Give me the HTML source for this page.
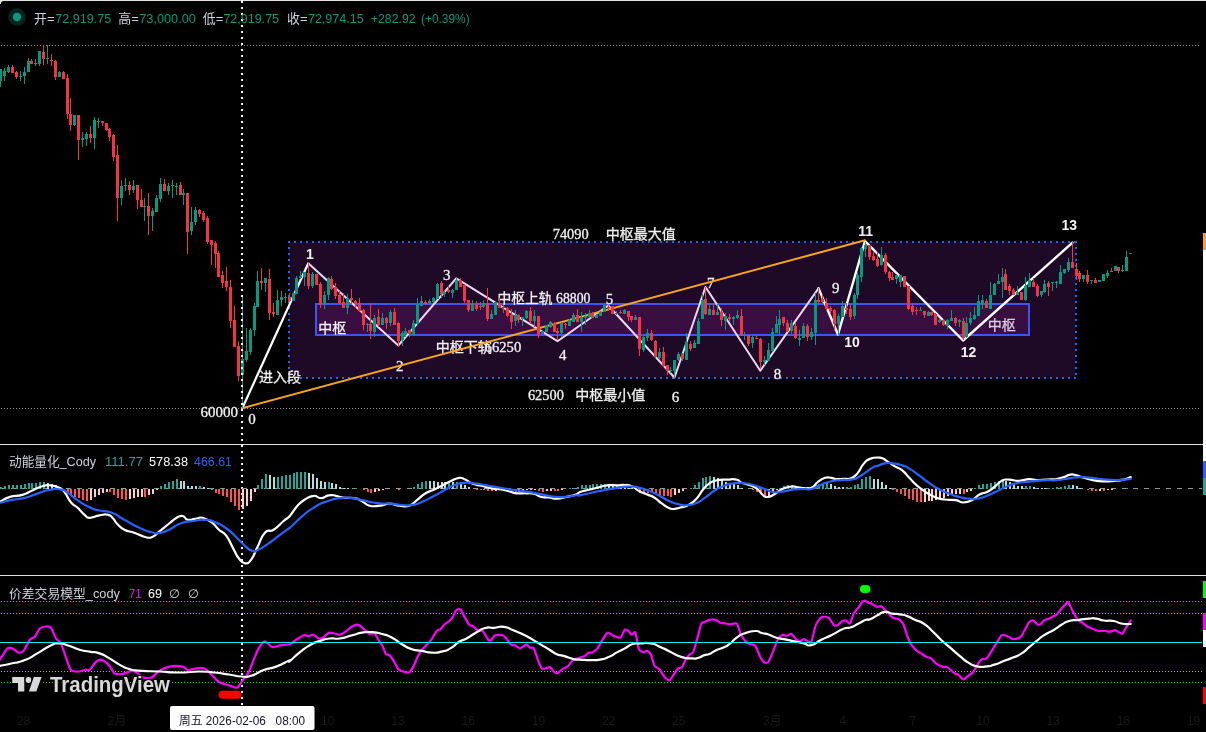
<!DOCTYPE html>
<html lang="zh"><head><meta charset="utf-8"><title>Chart</title>
<style>html,body{margin:0;padding:0;background:#000;}body{width:1206px;height:732px;overflow:hidden;position:relative;}svg{position:absolute;left:0;top:0;display:block;will-change:transform;opacity:0.999}text{font-family:"Liberation Sans","Noto Sans CJK SC",sans-serif;}.lbl{fill:#f2f2f2;font-size:14px;font-weight:400;stroke:#f2f2f2;stroke-width:0.3px;font-family:"Liberation Serif","Noto Sans CJK SC",sans-serif}.num{fill:#f4f4f4;font-size:14.5px;font-weight:400;font-family:"Liberation Serif","Noto Sans CJK SC",serif;stroke:#f4f4f4;stroke-width:0.35px}.ns{fill:#f4f4f4;font-size:15px;font-family:"Liberation Serif",serif;stroke:#f4f4f4;stroke-width:0.3px}.nb{fill:#f4f4f4;font-size:14px;font-weight:700;font-family:"Liberation Sans",sans-serif}.lg{font-size:12.6px}</style></head><body>
<svg width="1206" height="732" viewBox="0 0 1206 732">
<rect x="0" y="0" width="1206" height="732" fill="#000"/>
<path d="M0 4 V0 H1206 V1 H4 A3.2 3.2 0 0 0 0.8 4 Z" fill="#e6e6e6"/>
<line x1="1" y1="45.5" x2="1201" y2="45.5" stroke="#9a9a9a" stroke-width="1" stroke-dasharray="1 2" opacity="1" shape-rendering="crispEdges"/>
<line x1="1" y1="408.5" x2="1201" y2="408.5" stroke="#9a9a9a" stroke-width="1" stroke-dasharray="1 2" opacity="1" shape-rendering="crispEdges"/>
<g shape-rendering="crispEdges">
<rect x="289" y="242" width="787" height="136" fill="#1f0a27"/>
<rect x="316" y="304" width="713" height="31" fill="#3a1042" stroke="#3f56f5" stroke-width="2"/>
</g>
<g shape-rendering="crispEdges"><line x1="288" y1="242" x2="1077" y2="242" stroke="#2962ff" stroke-width="2" stroke-dasharray="2 4"/><line x1="288" y1="378" x2="1077" y2="378" stroke="#2962ff" stroke-width="2" stroke-dasharray="2 4"/><line x1="289" y1="241" x2="289" y2="379" stroke="#2962ff" stroke-width="2" stroke-dasharray="2 4"/><line x1="1076" y1="241" x2="1076" y2="379" stroke="#2962ff" stroke-width="2" stroke-dasharray="2 4"/></g>
<polyline points="242.3,408.2 308.3,263.3" fill="none" stroke="#ffffff" stroke-width="2.2" stroke-linejoin="round" stroke-linecap="round"/>
<polyline points="308.3,263.3 398.3,345.5 456.2,278.3 557.5,341.2 608.3,305.5 674.5,377.5 705.5,287.0 760.3,370.7 818.5,288.3" fill="none" stroke="#f0d7f5" stroke-width="2" stroke-linejoin="round" stroke-linecap="round"/>
<polyline points="818.5,288.3 838.0,334.5 865.0,241.1 963.0,340.5 1072.5,242.6" fill="none" stroke="#ffffff" stroke-width="2.4" stroke-linejoin="round" stroke-linecap="round"/>
<text x="248.2" y="423.5" class="ns" text-anchor="start" >0</text>
<text x="395.9" y="371.0" class="ns" text-anchor="start" >2</text>
<text x="442.9" y="279.6" class="ns" text-anchor="start" >3</text>
<text x="558.9" y="359.6" class="ns" text-anchor="start" >4</text>
<text x="605.8" y="304.4" class="ns" text-anchor="start" >5</text>
<text x="671.8" y="401.7" class="ns" text-anchor="start" >6</text>
<text x="707.0" y="287.6" class="ns" text-anchor="start" >7</text>
<text x="773.8" y="378.5" class="ns" text-anchor="start" >8</text>
<text x="832.1" y="292.6" class="ns" text-anchor="start" >9</text>
<text x="844.2" y="347.0" class="nb" text-anchor="start" >10</text>
<text x="858.2" y="235.6" class="nb" text-anchor="start" >11</text>
<text x="960.8" y="356.7" class="nb" text-anchor="start" >12</text>
<text x="1061.5" y="229.7" class="nb" text-anchor="start" >13</text>
<text x="306.0" y="258.8" class="nb" text-anchor="start" >1</text>
<text x="200.6" y="416.6" class="ns" text-anchor="start" >60000</text>
<text x="259" y="382" class="lbl" text-anchor="start" >进入段</text>
<text x="318.3" y="332.5" class="lbl" text-anchor="start" >中枢</text>
<text x="987.8" y="330" class="lbl" text-anchor="start" style="fill:#dfcbe6;stroke:#dfcbe6">中枢</text>
<text x="497.5" y="302.6" class="lbl" text-anchor="start" textLength="93" lengthAdjust="spacingAndGlyphs">中枢上轨 68800</text>
<text x="435.8" y="351.7" class="lbl" text-anchor="start" >中枢下轨</text>
<text x="484.7" y="351.7" class="lbl" text-anchor="start" textLength="36.5" lengthAdjust="spacingAndGlyphs">66250</text>
<text x="552.7" y="239" class="lbl" text-anchor="start" textLength="36" lengthAdjust="spacingAndGlyphs">74090</text>
<text x="605.8" y="239" class="lbl" text-anchor="start" >中枢最大值</text>
<text x="527.9" y="400.2" class="lbl" text-anchor="start" textLength="36" lengthAdjust="spacingAndGlyphs">62500</text>
<text x="575.3" y="400.2" class="lbl" text-anchor="start" >中枢最小值</text>
<line x1="242.3" y1="408.2" x2="865" y2="240.3" stroke="#fba61f" stroke-width="2" stroke-linecap="round"/>
<path d="M0 69h1v18h-1zM-1 69h3v12h-3zM4 68h1v13h-1zM3 71h3v5h-3zM8 65h1v8h-1zM7 67h3v5h-3zM20 71h1v10h-1zM19 76h3v1h-3zM24 67h1v17h-1zM23 72h3v4h-3zM28 58h1v14h-1zM27 61h3v11h-3zM35 59h1v7h-1zM34 63h3v1h-3zM39 51h1v15h-1zM38 51h3v13h-3zM47 45h1v19h-1zM46 58h3v1h-3zM59 71h1v6h-1zM58 72h3v5h-3zM74 115h1v11h-1zM73 115h3v10h-3zM82 132h1v15h-1zM81 138h3v2h-3zM86 132h1v14h-1zM85 134h3v5h-3zM94 117h1v32h-1zM93 120h3v18h-3zM98 118h1v10h-1zM97 121h3v1h-3zM121 180h1v25h-1zM120 186h3v12h-3zM125 178h1v13h-1zM124 185h3v1h-3zM133 180h1v13h-1zM132 186h3v4h-3zM144 198h1v23h-1zM143 206h3v1h-3zM152 208h1v23h-1zM151 211h3v5h-3zM156 195h1v17h-1zM155 198h3v14h-3zM160 178h1v24h-1zM159 184h3v15h-3zM168 183h1v12h-1zM167 186h3v5h-3zM172 180h1v18h-1zM171 185h3v1h-3zM176 183h1v12h-1zM175 186h3v1h-3zM183 189h1v16h-1zM182 193h3v2h-3zM191 207h1v28h-1zM190 222h3v9h-3zM195 207h1v18h-1zM194 210h3v12h-3zM242 295h1v113h-1zM241 359h3v16h-3zM246 328h1v34h-1zM245 351h3v9h-3zM250 328h1v27h-1zM249 330h3v22h-3zM254 303h1v33h-1zM253 306h3v24h-3zM257 271h1v36h-1zM256 281h3v26h-3zM265 278h1v14h-1zM264 278h3v5h-3zM277 290h1v25h-1zM276 300h3v15h-3zM281 291h1v15h-1zM280 297h3v3h-3zM285 293h1v10h-1zM284 297h3v1h-3zM293 293h1v8h-1zM292 293h3v8h-3zM296 276h1v18h-1zM295 278h3v16h-3zM300 271h1v8h-1zM299 276h3v2h-3zM304 272h1v14h-1zM303 272h3v5h-3zM312 272h1v16h-1zM311 274h3v12h-3zM324 291h1v18h-1zM323 295h3v9h-3zM328 277h1v23h-1zM327 278h3v17h-3zM347 294h1v20h-1zM346 298h3v10h-3zM367 323h1v9h-1zM366 324h3v1h-3zM374 315h1v22h-1zM373 318h3v14h-3zM382 313h1v12h-1zM381 318h3v7h-3zM390 310h1v16h-1zM389 312h3v11h-3zM402 331h1v15h-1zM401 333h3v7h-3zM405 328h1v9h-1zM404 331h3v4h-3zM413 320h1v15h-1zM412 323h3v12h-3zM417 298h1v27h-1zM416 304h3v20h-3zM421 296h1v10h-1zM420 301h3v5h-3zM429 299h1v5h-1zM428 301h3v3h-3zM433 297h1v6h-1zM432 298h3v4h-3zM437 283h1v16h-1zM436 284h3v15h-3zM444 290h1v7h-1zM443 292h3v2h-3zM452 289h1v9h-1zM451 290h3v3h-3zM456 278h1v12h-1zM455 280h3v10h-3zM472 300h1v11h-1zM471 303h3v8h-3zM483 300h1v8h-1zM482 303h3v4h-3zM491 310h1v9h-1zM490 314h3v5h-3zM495 301h1v14h-1zM494 302h3v13h-3zM515 310h1v16h-1zM514 315h3v6h-3zM522 317h1v9h-1zM521 317h3v2h-3zM526 310h1v9h-1zM525 311h3v7h-3zM534 310h1v17h-1zM533 316h3v5h-3zM542 330h1v4h-1zM541 331h3v3h-3zM546 325h1v7h-1zM545 325h3v7h-3zM550 321h1v7h-1zM549 322h3v5h-3zM561 322h1v15h-1zM560 323h3v10h-3zM569 319h1v7h-1zM568 320h3v6h-3zM573 313h1v9h-1zM572 315h3v7h-3zM581 312h1v20h-1zM580 317h3v5h-3zM585 313h1v12h-1zM584 316h3v2h-3zM589 310h1v7h-1zM588 313h3v4h-3zM596 314h1v4h-1zM595 315h3v3h-3zM600 311h1v5h-1zM599 312h3v4h-3zM604 304h1v8h-1zM603 305h3v7h-3zM616 311h1v4h-1zM615 313h3v1h-3zM624 309h1v5h-1zM623 310h3v4h-3zM635 315h1v5h-1zM634 317h3v3h-3zM643 336h1v16h-1zM642 337h3v13h-3zM647 329h1v12h-1zM646 333h3v5h-3zM659 348h1v12h-1zM658 352h3v6h-3zM670 367h1v6h-1zM669 370h3v1h-3zM674 360h1v18h-1zM673 360h3v11h-3zM678 352h1v9h-1zM677 354h3v6h-3zM686 333h1v27h-1zM685 342h3v18h-3zM694 340h1v8h-1zM693 343h3v5h-3zM698 318h1v26h-1zM697 321h3v23h-3zM702 294h1v25h-1zM701 300h3v19h-3zM709 304h1v11h-1zM708 309h3v6h-3zM717 304h1v11h-1zM716 312h3v3h-3zM725 313h1v17h-1zM724 316h3v5h-3zM733 316h1v9h-1zM732 317h3v2h-3zM737 310h1v9h-1zM736 315h3v3h-3zM744 332h1v8h-1zM743 335h3v1h-3zM752 335h1v13h-1zM751 337h3v6h-3zM764 356h1v9h-1zM763 360h3v2h-3zM768 343h1v18h-1zM767 350h3v11h-3zM772 328h1v23h-1zM771 332h3v19h-3zM776 316h1v17h-1zM775 324h3v9h-3zM779 310h1v24h-1zM778 319h3v6h-3zM791 320h1v14h-1zM790 323h3v8h-3zM799 330h1v16h-1zM798 338h3v2h-3zM803 323h1v15h-1zM802 326h3v12h-3zM811 328h1v12h-1zM810 332h3v5h-3zM815 293h1v52h-1zM814 300h3v33h-3zM838 314h1v21h-1zM837 316h3v8h-3zM842 301h1v16h-1zM841 306h3v11h-3zM854 293h1v26h-1zM853 295h3v21h-3zM857 271h1v28h-1zM856 275h3v20h-3zM861 247h1v35h-1zM860 248h3v29h-3zM865 242h1v15h-1zM864 245h3v4h-3zM881 247h1v19h-1zM880 255h3v10h-3zM896 274h1v10h-1zM895 275h3v4h-3zM900 275h1v12h-1zM899 275h3v7h-3zM920 307h1v4h-1zM919 310h3v1h-3zM928 311h1v5h-1zM927 312h3v4h-3zM939 318h1v5h-1zM938 320h3v2h-3zM947 319h1v10h-1zM946 320h3v6h-3zM951 310h1v11h-1zM950 318h3v3h-3zM959 319h1v8h-1zM958 320h3v2h-3zM966 317h1v21h-1zM965 323h3v14h-3zM970 312h1v13h-1zM969 318h3v5h-3zM974 307h1v13h-1zM973 315h3v4h-3zM978 295h1v21h-1zM977 301h3v15h-3zM982 295h1v14h-1zM981 300h3v4h-3zM990 282h1v27h-1zM989 295h3v14h-3zM994 283h1v12h-1zM993 284h3v11h-3zM998 274h1v10h-1zM997 281h3v3h-3zM1002 268h1v30h-1zM1001 277h3v5h-3zM1017 286h1v9h-1zM1016 292h3v3h-3zM1025 277h1v24h-1zM1024 286h3v14h-3zM1029 273h1v14h-1zM1028 280h3v7h-3zM1041 291h1v6h-1zM1040 291h3v4h-3zM1044 280h1v13h-1zM1043 284h3v8h-3zM1052 282h1v9h-1zM1051 282h3v1h-3zM1056 281h1v7h-1zM1055 282h3v1h-3zM1060 265h1v19h-1zM1059 272h3v12h-3zM1064 269h1v5h-1zM1063 269h3v4h-3zM1068 258h1v14h-1zM1067 262h3v8h-3zM1083 275h1v7h-1zM1082 275h3v4h-3zM1091 280h1v4h-1zM1090 280h3v1h-3zM1099 280h1v2h-1zM1098 280h3v2h-3zM1103 274h1v7h-1zM1102 274h3v7h-3zM1107 270h1v8h-1zM1106 273h3v3h-3zM1115 266h1v5h-1zM1114 266h3v5h-3zM1122 265h1v7h-1zM1121 270h3v1h-3zM1126 251h1v20h-1zM1125 257h3v14h-3zM1130 253h1v1h-1zM1129 253h3v1h-3z" fill="#089981" shape-rendering="crispEdges"/>
<path d="M12 65h1v8h-1zM11 67h3v6h-3zM16 71h1v8h-1zM15 72h3v5h-3zM31 59h1v5h-1zM30 61h3v3h-3zM43 45h1v20h-1zM42 52h3v7h-3zM51 54h1v12h-1zM50 60h3v1h-3zM55 60h1v20h-1zM54 61h3v16h-3zM63 71h1v8h-1zM62 72h3v7h-3zM67 74h1v45h-1zM66 78h3v36h-3zM70 98h1v33h-1zM69 114h3v11h-3zM78 115h1v45h-1zM77 115h3v25h-3zM90 126h1v17h-1zM89 134h3v4h-3zM102 121h1v5h-1zM101 121h3v2h-3zM106 123h1v8h-1zM105 123h3v7h-3zM109 128h1v13h-1zM108 129h3v8h-3zM113 134h1v27h-1zM112 135h3v22h-3zM117 145h1v76h-1zM116 155h3v43h-3zM129 181h1v14h-1zM128 185h3v5h-3zM137 185h1v24h-1zM136 185h3v15h-3zM141 189h1v18h-1zM140 200h3v7h-3zM148 193h1v42h-1zM147 206h3v10h-3zM164 179h1v12h-1zM163 184h3v7h-3zM180 182h1v13h-1zM179 185h3v10h-3zM187 193h1v61h-1zM186 193h3v39h-3zM199 209h1v8h-1zM198 210h3v4h-3zM203 211h1v11h-1zM202 213h3v7h-3zM207 216h1v28h-1zM206 218h3v24h-3zM211 240h1v25h-1zM210 240h3v5h-3zM215 241h1v27h-1zM214 243h3v11h-3zM218 251h1v26h-1zM217 253h3v24h-3zM222 271h1v17h-1zM221 275h3v8h-3zM226 267h1v24h-1zM225 281h3v6h-3zM230 280h1v48h-1zM229 287h3v34h-3zM234 306h1v41h-1zM233 320h3v27h-3zM238 341h1v40h-1zM237 346h3v30h-3zM261 268h1v22h-1zM260 281h3v2h-3zM269 269h1v51h-1zM268 279h3v34h-3zM273 303h1v14h-1zM272 312h3v2h-3zM289 293h1v9h-1zM288 297h3v4h-3zM308 262h1v27h-1zM307 273h3v13h-3zM316 274h1v11h-1zM315 274h3v11h-3zM320 282h1v26h-1zM319 284h3v21h-3zM331 276h1v14h-1zM330 279h3v10h-3zM335 283h1v16h-1zM334 287h3v9h-3zM339 291h1v13h-1zM338 295h3v8h-3zM343 293h1v15h-1zM342 302h3v6h-3zM351 289h1v15h-1zM350 298h3v2h-3zM355 300h1v8h-1zM354 301h3v3h-3zM359 298h1v14h-1zM358 303h3v8h-3zM363 309h1v21h-1zM362 310h3v15h-3zM370 303h1v36h-1zM369 324h3v7h-3zM378 309h1v18h-1zM377 317h3v8h-3zM386 317h1v12h-1zM385 318h3v5h-3zM394 308h1v17h-1zM393 312h3v13h-3zM398 322h1v25h-1zM397 323h3v18h-3zM409 330h1v7h-1zM408 330h3v4h-3zM425 300h1v5h-1zM424 302h3v2h-3zM441 281h1v17h-1zM440 283h3v11h-3zM448 286h1v7h-1zM447 290h3v2h-3zM460 278h1v9h-1zM459 280h3v7h-3zM464 284h1v19h-1zM463 285h3v16h-3zM468 300h1v12h-1zM467 300h3v10h-3zM476 301h1v10h-1zM475 303h3v6h-3zM480 302h1v8h-1zM479 306h3v1h-3zM487 288h1v33h-1zM486 303h3v16h-3zM499 298h1v10h-1zM498 303h3v5h-3zM503 305h1v8h-1zM502 307h3v1h-3zM507 307h1v10h-1zM506 308h3v8h-3zM511 309h1v20h-1zM510 315h3v7h-3zM518 314h1v9h-1zM517 315h3v5h-3zM530 307h1v17h-1zM529 311h3v10h-3zM538 316h1v22h-1zM537 316h3v19h-3zM554 322h1v10h-1zM553 323h3v9h-3zM557 328h1v12h-1zM556 331h3v2h-3zM565 323h1v6h-1zM564 324h3v1h-3zM577 309h1v13h-1zM576 315h3v7h-3zM592 312h1v6h-1zM591 313h3v5h-3zM608 305h1v6h-1zM607 307h3v1h-3zM612 306h1v8h-1zM611 306h3v8h-3zM620 310h1v4h-1zM619 312h3v1h-3zM628 311h1v10h-1zM627 311h3v6h-3zM631 316h1v6h-1zM630 316h3v4h-3zM639 317h1v39h-1zM638 317h3v32h-3zM651 330h1v11h-1zM650 333h3v7h-3zM655 340h1v18h-1zM654 341h3v16h-3zM663 347h1v20h-1zM662 352h3v14h-3zM667 365h1v10h-1zM666 365h3v6h-3zM682 353h1v8h-1zM681 354h3v5h-3zM690 341h1v10h-1zM689 344h3v5h-3zM705 287h1v28h-1zM704 299h3v15h-3zM713 303h1v12h-1zM712 310h3v5h-3zM721 308h1v18h-1zM720 312h3v8h-3zM729 314h1v8h-1zM728 317h3v2h-3zM741 309h1v27h-1zM740 316h3v20h-3zM748 335h1v11h-1zM747 335h3v9h-3zM756 336h1v3h-1zM755 338h3v1h-3zM760 338h1v31h-1zM759 339h3v23h-3zM783 317h1v9h-1zM782 317h3v6h-3zM787 320h1v12h-1zM786 323h3v8h-3zM795 323h1v16h-1zM794 326h3v12h-3zM807 324h1v17h-1zM806 326h3v11h-3zM818 288h1v16h-1zM817 300h3v2h-3zM822 294h1v9h-1zM821 299h3v3h-3zM826 298h1v12h-1zM825 303h3v6h-3zM830 306h1v8h-1zM829 308h3v3h-3zM834 309h1v22h-1zM833 310h3v14h-3zM846 303h1v11h-1zM845 308h3v2h-3zM850 304h1v16h-1zM849 309h3v8h-3zM869 245h1v15h-1zM868 245h3v12h-3zM873 251h1v10h-1zM872 256h3v4h-3zM877 252h1v15h-1zM876 259h3v7h-3zM885 253h1v21h-1zM884 255h3v17h-3zM889 271h1v10h-1zM888 272h3v6h-3zM892 272h1v8h-1zM891 277h3v3h-3zM904 276h1v11h-1zM903 276h3v11h-3zM908 286h1v24h-1zM907 286h3v23h-3zM912 304h1v11h-1zM911 306h3v6h-3zM916 307h1v8h-1zM915 310h3v1h-3zM924 311h1v7h-1zM923 311h3v4h-3zM931 312h1v4h-1zM930 312h3v3h-3zM935 313h1v12h-1zM934 314h3v11h-3zM943 319h1v7h-1zM942 320h3v5h-3zM955 317h1v9h-1zM954 318h3v5h-3zM963 318h1v22h-1zM962 321h3v17h-3zM986 299h1v9h-1zM985 301h3v7h-3zM1005 269h1v21h-1zM1004 274h3v16h-3zM1009 284h1v11h-1zM1008 286h3v5h-3zM1013 288h1v7h-1zM1012 290h3v5h-3zM1021 292h1v8h-1zM1020 292h3v8h-3zM1033 278h1v9h-1zM1032 282h3v5h-3zM1037 284h1v13h-1zM1036 286h3v10h-3zM1048 281h1v15h-1zM1047 283h3v4h-3zM1072 242h1v26h-1zM1071 262h3v6h-3zM1076 263h1v17h-1zM1075 269h3v7h-3zM1079 271h1v11h-1zM1078 273h3v6h-3zM1087 270h1v14h-1zM1086 275h3v7h-3zM1095 278h1v5h-1zM1094 280h3v3h-3zM1111 268h1v4h-1zM1110 271h3v1h-3zM1118 267h1v6h-1zM1117 267h3v4h-3z" fill="#f23645" shape-rendering="crispEdges"/>
<line x1="242" y1="1" x2="242" y2="706" stroke="#fff" stroke-width="2" stroke-dasharray="2 4" shape-rendering="crispEdges"/>
<circle cx="17" cy="17" r="9" fill="#06231f"/><circle cx="17" cy="17" r="4.2" fill="#089981"/>
<text x="34" y="22.5" class="lg" fill="#d1d4dc" textLength="20.5" lengthAdjust="spacingAndGlyphs">开=</text>
<text x="55.2" y="22.5" class="lg" fill="#089981" textLength="56.2" lengthAdjust="spacingAndGlyphs">72,919.75</text>
<text x="118.2" y="22.5" class="lg" fill="#d1d4dc" textLength="20.5" lengthAdjust="spacingAndGlyphs">高=</text>
<text x="139.3" y="22.5" class="lg" fill="#089981" textLength="56.5" lengthAdjust="spacingAndGlyphs">73,000.00</text>
<text x="202.7" y="22.5" class="lg" fill="#d1d4dc" textLength="20.5" lengthAdjust="spacingAndGlyphs">低=</text>
<text x="223.4" y="22.5" class="lg" fill="#089981" textLength="55.7" lengthAdjust="spacingAndGlyphs">72,919.75</text>
<text x="287" y="22.5" class="lg" fill="#d1d4dc" textLength="20.5" lengthAdjust="spacingAndGlyphs">收=</text>
<text x="307.9" y="22.5" class="lg" fill="#089981" textLength="55.9" lengthAdjust="spacingAndGlyphs">72,974.15</text>
<text x="370.8" y="22.5" class="lg" fill="#089981" textLength="44.8" lengthAdjust="spacingAndGlyphs">+282.92</text>
<text x="421" y="22.5" class="lg" fill="#089981" textLength="48.6" lengthAdjust="spacingAndGlyphs">(+0.39%)</text>
<rect x="0" y="444" width="1206" height="1" fill="#e0e0e0"/>
<rect x="0" y="575" width="1206" height="1" fill="#e0e0e0"/>
<line x1="0" y1="488.5" x2="1202" y2="488.5" stroke="#9a9a9a" stroke-width="1" stroke-dasharray="5 6" shape-rendering="crispEdges"/>
<path d="M0 487.2h2v1.3h-2zM4 486.0h2v2.5h-2zM8 484.8h2v3.7h-2zM12 484.6h2v3.9h-2zM16 484.6h2v3.9h-2zM20 484.6h2v3.9h-2zM24 483.9h2v4.6h-2zM28 483.3h2v5.2h-2zM31 482.9h2v5.6h-2zM35 482.5h2v6.0h-2zM39 482.0h2v6.5h-2zM43 481.9h2v6.6h-2zM160 486.3h2v2.2h-2zM164 484.0h2v4.5h-2zM168 481.7h2v6.8h-2zM172 480.5h2v8.0h-2zM176 479.4h2v9.1h-2zM199 486.0h2v2.5h-2zM257 485.3h2v3.2h-2zM261 478.7h2v9.8h-2zM265 473.7h2v14.8h-2zM277 476.5h2v12.0h-2zM281 475.9h2v12.6h-2zM285 475.4h2v13.1h-2zM289 474.9h2v13.6h-2zM293 473.1h2v15.4h-2zM296 471.7h2v16.8h-2zM300 471.5h2v17.0h-2zM304 471.5h2v17.0h-2zM328 482.0h2v6.5h-2zM355 488.1h2v0.6h-2zM413 486.5h2v2.0h-2zM417 484.4h2v4.1h-2zM421 482.1h2v6.4h-2zM425 480.7h2v7.8h-2zM448 481.8h2v6.7h-2zM456 481.8h2v6.7h-2zM569 488.3h2v0.6h-2zM573 487.8h2v0.7h-2zM577 486.7h2v1.8h-2zM581 484.7h2v3.8h-2zM585 484.6h2v3.9h-2zM589 484.5h2v4.0h-2zM592 484.3h2v4.2h-2zM596 484.1h2v4.4h-2zM600 483.9h2v4.6h-2zM604 483.7h2v4.8h-2zM690 487.7h2v0.8h-2zM694 484.8h2v3.7h-2zM698 482.1h2v6.4h-2zM702 478.3h2v10.2h-2zM705 476.7h2v11.8h-2zM709 475.7h2v12.8h-2zM779 487.6h2v0.9h-2zM783 485.8h2v2.7h-2zM787 485.1h2v3.4h-2zM791 484.6h2v3.9h-2zM811 487.2h2v1.3h-2zM815 484.6h2v3.9h-2zM818 483.5h2v5.0h-2zM822 482.9h2v5.6h-2zM826 482.7h2v5.8h-2zM846 487.2h2v1.3h-2zM850 487.1h2v1.4h-2zM854 485.3h2v3.2h-2zM857 483.5h2v5.0h-2zM861 479.2h2v9.3h-2zM865 476.9h2v11.6h-2zM869 476.2h2v12.3h-2zM974 488.0h2v0.6h-2zM978 485.0h2v3.5h-2zM982 484.4h2v4.1h-2zM986 484.2h2v4.3h-2zM990 483.3h2v5.2h-2zM994 482.3h2v6.2h-2zM998 480.6h2v7.9h-2zM1002 479.4h2v9.1h-2zM1025 485.8h2v2.7h-2zM1029 485.7h2v2.8h-2zM1048 487.6h2v0.9h-2zM1052 487.5h2v1.0h-2zM1056 487.4h2v1.1h-2zM1060 486.8h2v1.7h-2zM1064 486.1h2v2.4h-2zM1068 484.9h2v3.6h-2zM1126 487.7h2v0.8h-2z" fill="#26a69a" shape-rendering="crispEdges"/>
<path d="M47 482.9h2v5.6h-2zM51 483.6h2v4.9h-2zM55 485.2h2v3.3h-2zM59 486.7h2v1.8h-2zM180 480.6h2v7.9h-2zM183 481.4h2v7.1h-2zM187 485.6h2v2.9h-2zM191 486.0h2v2.5h-2zM195 486.0h2v2.5h-2zM203 486.6h2v1.9h-2zM207 488.2h2v0.6h-2zM269 475.1h2v13.4h-2zM273 477.0h2v11.5h-2zM308 472.7h2v15.8h-2zM312 474.2h2v14.3h-2zM316 477.6h2v10.9h-2zM320 481.2h2v7.3h-2zM324 482.0h2v6.5h-2zM331 483.0h2v5.5h-2zM335 484.4h2v4.1h-2zM339 486.6h2v1.9h-2zM343 487.9h2v0.6h-2zM347 488.1h2v0.6h-2zM429 481.0h2v7.5h-2zM433 481.3h2v7.2h-2zM437 481.5h2v7.0h-2zM441 481.8h2v6.7h-2zM444 481.9h2v6.6h-2zM452 482.0h2v6.5h-2zM460 482.2h2v6.3h-2zM464 484.5h2v4.0h-2zM468 486.6h2v1.9h-2zM608 483.8h2v4.7h-2zM612 484.6h2v3.9h-2zM616 485.5h2v3.0h-2zM620 485.9h2v2.6h-2zM624 486.2h2v2.3h-2zM628 487.5h2v1.0h-2zM631 488.1h2v0.6h-2zM713 477.3h2v11.2h-2zM717 478.2h2v10.3h-2zM721 480.2h2v8.3h-2zM725 481.8h2v6.7h-2zM729 482.8h2v5.7h-2zM733 484.0h2v4.5h-2zM737 484.8h2v3.7h-2zM741 487.8h2v0.7h-2zM795 485.7h2v2.8h-2zM799 486.5h2v2.0h-2zM803 487.0h2v1.5h-2zM807 487.2h2v1.3h-2zM830 484.2h2v4.3h-2zM834 485.9h2v2.6h-2zM838 486.9h2v1.6h-2zM842 487.2h2v1.3h-2zM873 478.5h2v10.0h-2zM877 479.4h2v9.1h-2zM881 481.5h2v7.0h-2zM885 485.1h2v3.4h-2zM889 487.8h2v0.7h-2zM1005 480.5h2v8.0h-2zM1009 481.5h2v7.0h-2zM1013 483.6h2v4.9h-2zM1017 485.5h2v3.0h-2zM1021 485.9h2v2.6h-2zM1033 486.7h2v1.8h-2zM1037 487.5h2v1.0h-2zM1041 487.7h2v0.8h-2zM1044 487.8h2v0.7h-2zM1072 485.0h2v3.5h-2zM1076 486.2h2v2.3h-2zM1079 487.6h2v0.9h-2z" fill="#b2dfdb" shape-rendering="crispEdges"/>
<path d="M63 488.5h2v0.6h-2zM67 488.5h2v4.9h-2zM70 488.5h2v7.8h-2zM74 488.5h2v8.4h-2zM78 488.5h2v9.2h-2zM82 488.5h2v11.1h-2zM86 488.5h2v12.0h-2zM109 488.5h2v3.9h-2zM113 488.5h2v6.1h-2zM117 488.5h2v9.3h-2zM121 488.5h2v10.5h-2zM125 488.5h2v11.1h-2zM144 488.5h2v8.2h-2zM211 488.5h2v1.2h-2zM215 488.5h2v4.3h-2zM218 488.5h2v5.9h-2zM222 488.5h2v7.3h-2zM226 488.5h2v8.7h-2zM230 488.5h2v13.1h-2zM234 488.5h2v17.5h-2zM238 488.5h2v21.2h-2zM359 488.5h2v0.6h-2zM363 488.5h2v1.8h-2zM367 488.5h2v3.6h-2zM370 488.5h2v4.4h-2zM394 488.5h2v0.6h-2zM398 488.5h2v1.0h-2zM472 488.5h2v0.6h-2zM476 488.5h2v1.1h-2zM480 488.5h2v1.4h-2zM483 488.5h2v1.7h-2zM487 488.5h2v2.1h-2zM491 488.5h2v2.4h-2zM503 488.5h2v2.0h-2zM507 488.5h2v2.3h-2zM511 488.5h2v2.8h-2zM515 488.5h2v3.4h-2zM538 488.5h2v2.4h-2zM542 488.5h2v3.0h-2zM554 488.5h2v2.1h-2zM557 488.5h2v2.1h-2zM635 488.5h2v1.7h-2zM639 488.5h2v4.2h-2zM643 488.5h2v4.5h-2zM647 488.5h2v4.8h-2zM651 488.5h2v4.9h-2zM655 488.5h2v5.2h-2zM659 488.5h2v6.8h-2zM663 488.5h2v7.6h-2zM667 488.5h2v7.7h-2zM670 488.5h2v8.0h-2zM744 488.5h2v0.6h-2zM748 488.5h2v0.8h-2zM752 488.5h2v1.5h-2zM756 488.5h2v3.0h-2zM760 488.5h2v5.6h-2zM764 488.5h2v7.8h-2zM892 488.5h2v1.6h-2zM896 488.5h2v3.5h-2zM900 488.5h2v5.0h-2zM904 488.5h2v7.2h-2zM908 488.5h2v10.0h-2zM912 488.5h2v11.8h-2zM916 488.5h2v13.2h-2zM920 488.5h2v13.5h-2zM963 488.5h2v5.4h-2zM1083 488.5h2v0.6h-2zM1087 488.5h2v1.4h-2zM1091 488.5h2v2.1h-2zM1095 488.5h2v2.4h-2zM1103 488.5h2v2.4h-2z" fill="#ff5252" shape-rendering="crispEdges"/>
<path d="M90 488.5h2v11.4h-2zM94 488.5h2v8.7h-2zM98 488.5h2v6.1h-2zM102 488.5h2v4.6h-2zM106 488.5h2v3.5h-2zM129 488.5h2v10.1h-2zM133 488.5h2v9.0h-2zM137 488.5h2v8.3h-2zM141 488.5h2v8.1h-2zM148 488.5h2v6.8h-2zM152 488.5h2v5.0h-2zM156 488.5h2v1.2h-2zM242 488.5h2v20.6h-2zM246 488.5h2v17.9h-2zM250 488.5h2v12.0h-2zM254 488.5h2v3.0h-2zM374 488.5h2v3.5h-2zM378 488.5h2v2.8h-2zM382 488.5h2v1.9h-2zM386 488.5h2v0.8h-2zM402 488.5h2v0.9h-2zM405 488.5h2v0.9h-2zM409 488.5h2v0.8h-2zM495 488.5h2v2.1h-2zM499 488.5h2v1.9h-2zM518 488.5h2v3.1h-2zM522 488.5h2v2.5h-2zM526 488.5h2v1.8h-2zM530 488.5h2v1.4h-2zM534 488.5h2v1.3h-2zM546 488.5h2v2.3h-2zM550 488.5h2v2.0h-2zM561 488.5h2v1.2h-2zM565 488.5h2v0.6h-2zM674 488.5h2v6.2h-2zM678 488.5h2v4.2h-2zM682 488.5h2v2.4h-2zM686 488.5h2v0.6h-2zM768 488.5h2v7.5h-2zM772 488.5h2v4.1h-2zM776 488.5h2v1.2h-2zM924 488.5h2v13.4h-2zM928 488.5h2v12.7h-2zM931 488.5h2v12.3h-2zM935 488.5h2v11.8h-2zM939 488.5h2v10.1h-2zM943 488.5h2v9.2h-2zM947 488.5h2v7.8h-2zM951 488.5h2v6.4h-2zM955 488.5h2v5.2h-2zM959 488.5h2v5.0h-2zM966 488.5h2v3.9h-2zM970 488.5h2v2.2h-2zM1099 488.5h2v2.3h-2zM1107 488.5h2v1.9h-2zM1111 488.5h2v1.3h-2zM1115 488.5h2v0.9h-2zM1118 488.5h2v0.6h-2z" fill="#ffcdd2" shape-rendering="crispEdges"/>
<path d="M0.0 501.8C2.7 500.5 4.0 498.7 10.0 496.9C15.9 495.0 16.4 496.6 22.4 494.9C28.4 493.2 27.0 492.7 32.3 490.4C37.6 488.1 37.3 487.5 42.3 486.2C47.3 484.8 46.4 485.0 51.0 485.4C55.6 485.9 56.1 486.1 59.7 487.9C63.3 489.8 61.7 488.5 64.7 492.4C67.7 496.2 67.6 498.4 70.9 502.3C74.2 506.3 73.5 504.0 77.1 507.3C80.8 510.6 81.3 512.0 84.6 514.8C87.9 517.6 85.6 517.6 89.6 517.8C93.5 517.9 94.5 516.1 99.5 515.3C104.5 514.5 104.6 513.9 108.2 514.8C111.9 515.6 110.9 516.2 113.2 518.5C115.5 520.8 113.9 520.5 116.9 523.5C119.9 526.5 119.7 527.2 124.4 529.7C129.0 532.2 129.0 530.8 134.3 532.7C139.6 534.5 139.6 535.5 144.3 536.7C148.9 537.9 147.8 538.5 151.7 537.2C155.7 535.8 154.6 535.3 159.2 531.7C163.8 528.0 164.5 527.2 169.2 523.5C173.8 519.8 173.0 519.8 176.6 517.8C180.3 515.8 179.9 515.5 182.8 516.0C185.8 516.6 184.2 519.1 187.8 519.8C191.5 520.4 192.5 519.0 196.5 518.5C200.5 518.0 198.8 516.8 202.7 517.8C206.7 518.8 207.1 519.1 211.4 522.2C215.8 525.4 214.9 526.1 218.9 529.7C222.9 533.3 222.4 530.6 226.4 535.9C230.3 541.2 230.5 543.6 233.8 549.6C237.1 555.6 235.8 554.7 238.8 558.3C241.8 562.0 241.7 563.0 245.0 563.3C248.3 563.6 247.9 563.9 251.2 559.6C254.6 555.2 253.8 554.3 257.5 547.1C261.1 540.0 260.6 537.3 264.9 532.7C269.2 528.0 268.7 532.8 273.6 529.7C278.6 526.6 279.2 524.7 283.6 521.0C287.9 517.2 286.3 519.7 290.0 515.7C293.7 511.6 293.5 510.0 297.5 505.7C301.4 501.4 300.6 502.1 304.9 499.5C309.2 496.8 309.3 496.1 313.6 495.8C317.9 495.4 317.1 498.4 321.1 498.2C325.1 498.1 324.6 495.9 328.6 495.3C332.5 494.6 332.0 495.1 336.0 495.8C340.0 496.4 338.5 497.1 343.5 497.7C348.5 498.4 349.7 497.3 354.7 498.2C359.7 499.2 358.2 499.2 362.1 501.2C366.1 503.2 365.0 504.5 369.6 505.7C374.2 506.9 374.2 506.2 379.6 505.7C384.9 505.2 384.2 503.7 389.5 503.7C394.8 503.7 394.1 505.2 399.5 505.7C404.8 506.2 404.8 507.2 409.4 505.7C414.0 504.2 412.6 503.5 416.9 500.2C421.2 496.9 420.9 496.1 425.6 493.3C430.2 490.4 430.0 491.5 434.3 489.5C438.6 487.5 437.4 488.0 441.7 485.8C446.1 483.6 445.8 483.4 450.4 481.3C455.1 479.2 455.2 478.3 459.2 477.8C463.1 477.4 461.7 478.0 465.4 479.6C469.0 481.2 468.5 482.2 472.8 483.8C477.1 485.5 476.6 484.6 481.5 485.8C486.5 487.0 486.2 487.3 491.5 488.3C496.8 489.3 496.8 488.7 501.4 489.5C506.1 490.3 504.9 490.3 508.9 491.3C512.9 492.3 511.7 492.7 516.4 493.3C521.0 493.8 521.7 493.1 526.3 493.3C531.0 493.4 529.8 492.8 533.8 493.8C537.8 494.8 537.3 496.0 541.2 497.0C545.2 498.0 544.4 497.0 548.7 497.5C553.0 498.0 552.8 498.9 557.4 498.7C562.1 498.6 561.1 498.1 566.1 497.0C571.1 495.9 572.4 495.8 576.1 494.5C579.8 493.2 576.3 493.3 580.0 492.0C583.7 490.7 584.6 490.9 590.0 489.5C595.3 488.2 595.3 488.2 599.9 487.0C604.5 485.9 602.7 485.8 607.4 485.3C612.0 484.8 612.7 485.4 617.3 485.3C622.0 485.2 620.8 484.7 624.8 485.1C628.8 485.4 628.3 484.8 632.2 486.5C636.2 488.3 635.7 489.4 639.7 491.5C643.7 493.6 643.2 492.8 647.2 494.5C651.1 496.2 650.6 495.3 654.6 497.7C658.6 500.2 657.8 500.8 662.1 503.7C666.4 506.6 666.2 507.6 670.8 508.7C675.4 509.7 674.5 508.8 679.5 507.7C684.5 506.6 684.8 507.0 689.5 504.5C694.1 501.9 693.3 502.2 696.9 498.2C700.6 494.3 699.8 493.5 703.1 489.5C706.5 485.6 705.7 485.8 709.4 483.3C713.0 480.9 712.2 481.3 716.8 480.3C721.5 479.3 721.5 479.8 726.8 479.6C732.1 479.4 732.7 478.7 736.7 479.6C740.7 480.4 737.7 481.2 741.7 482.8C745.7 484.5 747.3 484.0 751.6 485.8C756.0 487.6 754.9 487.1 757.9 489.5C760.8 492.0 760.2 493.0 762.8 495.0C765.5 497.0 764.8 497.1 767.8 497.0C770.8 496.9 770.4 496.5 774.0 494.5C777.7 492.5 776.8 491.7 781.5 489.5C786.1 487.4 786.1 487.0 791.4 486.5C796.7 486.1 796.1 487.5 801.4 487.8C806.7 488.1 807.0 489.3 811.3 487.8C815.7 486.3 813.9 484.7 817.6 482.1C821.2 479.4 821.4 479.0 825.0 477.8C828.7 476.7 828.3 477.5 831.2 477.8C834.2 478.2 832.9 478.8 836.2 479.1C839.5 479.3 839.7 479.0 843.7 478.8C847.7 478.6 847.5 479.8 851.1 478.3C854.8 476.9 854.0 477.2 857.4 473.4C860.7 469.5 860.3 467.8 863.6 463.9C866.9 460.1 865.4 460.6 869.8 458.9C874.2 457.3 875.3 457.0 880.0 457.7C884.6 458.4 883.4 459.1 887.4 461.4C891.4 463.7 890.9 464.0 894.9 466.4C898.9 468.8 898.4 467.2 902.3 470.4C906.3 473.6 905.8 474.2 909.8 478.3C913.8 482.5 913.3 482.4 917.3 485.8C921.2 489.3 920.1 488.3 924.7 491.3C929.4 494.3 929.4 494.8 934.7 497.0C940.0 499.2 939.0 498.6 944.6 499.5C950.3 500.3 950.8 499.4 955.8 500.2C960.8 501.0 959.0 502.5 963.3 502.5C967.6 502.5 967.7 502.4 972.0 500.2C976.3 498.1 975.5 496.7 979.5 494.5C983.4 492.3 982.9 494.0 986.9 492.0C990.9 490.0 990.4 490.0 994.4 487.0C998.4 484.1 997.9 482.8 1001.8 480.8C1005.8 478.8 1004.7 479.6 1009.3 479.6C1013.9 479.6 1013.9 481.0 1019.3 480.8C1024.6 480.7 1024.6 479.3 1029.2 479.1C1033.8 478.9 1032.0 479.9 1036.7 480.1C1041.3 480.2 1041.3 479.8 1046.6 479.6C1051.9 479.3 1051.9 479.7 1056.6 479.1C1061.2 478.4 1060.4 478.3 1064.0 477.1C1067.7 475.9 1066.9 475.1 1070.2 474.6C1073.6 474.1 1072.8 474.5 1076.5 475.4C1080.1 476.2 1079.3 476.5 1083.9 477.8C1088.6 479.2 1088.6 479.4 1093.9 480.3C1099.2 481.3 1098.5 481.2 1103.8 481.3C1109.1 481.5 1108.5 481.3 1113.8 480.8C1119.1 480.4 1119.2 480.6 1123.7 479.6C1128.2 478.6 1128.8 477.8 1130.7 477.1" fill="none" stroke="#ffffff" stroke-width="2.2" stroke-linejoin="round" stroke-linecap="round"/>
<path d="M0.0 502.8C4.1 501.8 4.1 501.5 12.4 499.9C20.7 498.2 16.6 499.9 24.9 497.9C33.2 495.8 29.0 496.3 37.3 493.6C45.6 491.0 42.3 491.3 49.8 489.9C57.2 488.5 53.9 488.6 59.7 489.4C65.5 490.2 61.4 488.9 67.2 492.4C73.0 495.9 69.7 494.9 77.1 499.9C84.6 504.8 82.1 503.7 89.6 507.3C97.0 510.9 92.0 508.7 99.5 510.5C107.0 512.4 103.6 509.7 111.9 512.8C120.2 515.9 115.3 514.8 124.4 519.8C133.5 524.7 130.2 523.6 139.3 527.7C148.4 531.9 145.1 530.4 151.7 532.2C158.4 533.9 153.4 533.8 159.2 532.9C165.0 532.1 161.7 533.0 169.2 529.7C176.6 526.4 173.3 525.9 181.6 523.0C189.9 520.1 186.6 522.1 194.0 521.0C201.5 519.9 197.3 519.5 204.0 519.8C210.6 520.0 206.5 518.8 213.9 521.7C221.4 524.6 218.9 523.3 226.4 528.5C233.8 533.6 230.1 531.4 236.3 537.2C242.5 543.0 239.6 541.3 245.0 545.9C250.4 550.4 247.9 549.6 252.5 550.8C257.0 552.1 253.3 552.1 258.7 549.6C264.1 547.1 262.0 547.9 268.7 543.4C275.3 538.8 272.0 540.9 278.6 535.9C285.2 530.9 284.8 531.2 288.6 528.5C292.4 525.7 285.4 531.7 290.0 527.6C294.6 523.5 294.1 523.0 302.4 516.1C310.7 509.3 306.6 511.9 314.9 506.9C323.2 502.0 319.0 504.1 327.3 501.2C335.6 498.3 331.5 499.2 339.8 498.2C348.0 497.2 343.9 497.4 352.2 498.2C360.5 499.1 356.3 499.1 364.6 500.7C372.9 502.4 368.8 502.2 377.1 503.2C385.4 504.2 381.2 503.1 389.5 503.7C397.8 504.3 394.5 504.5 401.9 505.0C409.4 505.4 405.3 506.0 411.9 505.0C418.5 504.0 414.4 505.0 421.8 502.0C429.3 498.9 426.8 499.6 434.3 495.8C441.7 491.9 437.6 493.8 444.2 490.3C450.9 486.8 447.5 487.8 454.2 485.3C460.8 482.8 457.5 483.5 464.1 482.8C470.8 482.2 466.6 482.5 474.1 483.3C481.5 484.1 478.2 483.9 486.5 485.3C494.8 486.7 490.7 486.1 499.0 487.5C507.2 489.0 503.1 488.3 511.4 489.5C519.7 490.8 515.5 490.0 523.8 491.3C532.1 492.5 528.0 491.8 536.3 493.3C544.6 494.8 541.2 494.5 548.7 495.8C556.2 497.0 552.0 496.7 558.7 497.0C565.3 497.2 562.0 497.2 568.6 496.5C575.2 495.8 574.8 495.4 578.6 495.0C582.4 494.6 575.4 496.1 580.0 495.3C584.6 494.4 584.1 494.3 592.4 492.5C600.7 490.8 596.6 491.6 604.9 490.0C613.2 488.5 609.0 489.0 617.3 487.8C625.6 486.6 622.3 486.5 629.8 486.5C637.2 486.5 633.1 486.2 639.7 487.8C646.3 489.4 643.0 488.6 649.7 491.3C656.3 493.9 653.0 492.4 659.6 495.8C666.2 499.1 662.9 498.3 669.6 501.2C676.2 504.1 673.7 503.2 679.5 504.5C685.3 505.7 681.6 505.4 687.0 505.0C692.4 504.5 689.9 505.5 695.7 503.2C701.5 501.0 698.2 502.4 704.4 498.2C710.6 494.1 707.7 494.9 714.3 490.8C721.0 486.6 717.6 488.3 724.3 485.8C730.9 483.3 727.6 484.1 734.2 483.3C740.9 482.5 737.5 482.7 744.2 483.3C750.8 484.0 747.5 483.5 754.1 485.3C760.8 487.1 757.4 486.5 764.1 488.8C770.7 491.0 767.4 491.2 774.0 492.0C780.7 492.8 777.3 492.1 784.0 491.3C790.6 490.4 787.3 490.3 793.9 489.5C800.6 488.8 797.7 489.3 803.9 489.0C810.1 488.8 806.8 490.3 812.6 488.8C818.4 487.3 815.1 487.0 821.3 484.6C827.5 482.1 824.6 482.8 831.2 481.3C837.9 479.8 834.6 480.7 841.2 480.1C847.8 479.5 845.3 480.6 851.1 479.6C856.9 478.6 853.6 479.6 858.6 477.1C863.6 474.6 861.1 475.4 866.1 472.1C871.0 468.8 869.7 469.2 873.5 467.1C877.3 465.1 873.7 467.1 877.5 465.9C881.3 464.7 880.0 464.2 884.9 463.4C889.9 462.6 886.6 462.7 892.4 463.4C898.2 464.1 896.5 463.6 902.3 465.4C908.1 467.2 904.0 465.4 909.8 468.9C915.6 472.4 913.1 471.0 919.8 475.9C926.4 480.7 923.1 478.8 929.7 483.3C936.3 487.9 933.0 486.0 939.7 489.5C946.3 493.0 943.0 491.3 949.6 493.8C956.2 496.2 952.9 495.3 959.6 497.0C966.2 498.7 963.7 498.2 969.5 498.7C975.3 499.3 971.2 499.7 977.0 498.7C982.8 497.7 980.3 498.2 986.9 495.8C993.5 493.3 990.2 494.3 996.9 491.3C1003.5 488.2 1000.2 489.2 1006.8 486.5C1013.4 483.9 1009.3 485.0 1016.8 483.3C1024.2 481.7 1020.1 482.6 1029.2 481.6C1038.3 480.6 1035.0 480.8 1044.1 480.3C1053.3 479.8 1048.3 480.7 1056.6 480.1C1064.9 479.4 1061.5 479.3 1069.0 478.3C1076.5 477.3 1072.3 477.3 1079.0 477.1C1085.6 476.8 1082.3 477.0 1088.9 477.6C1095.5 478.2 1091.4 478.1 1098.9 478.8C1106.3 479.6 1103.8 479.5 1111.3 479.8C1118.8 480.2 1114.8 480.2 1121.2 479.8C1127.7 479.5 1127.5 479.2 1130.7 478.8" fill="none" stroke="#2962ff" stroke-width="2.2" stroke-linejoin="round" stroke-linecap="round"/>
<text x="9" y="465.8" class="lg" fill="#d1d4dc" textLength="87" lengthAdjust="spacingAndGlyphs">动能量化_Cody</text>
<text x="105" y="465.8" class="lg" fill="#26a69a" textLength="38" lengthAdjust="spacingAndGlyphs">111.77</text>
<text x="149" y="465.8" class="lg" fill="#ffffff" textLength="39" lengthAdjust="spacingAndGlyphs">578.38</text>
<text x="194" y="465.8" class="lg" fill="#2962ff" textLength="38" lengthAdjust="spacingAndGlyphs">466.61</text>
<line x1="1" y1="601.5" x2="1203" y2="601.5" stroke="#00e000" stroke-width="1" stroke-dasharray="1 2" opacity="1" shape-rendering="crispEdges"/>
<line x1="1" y1="613.5" x2="1203" y2="613.5" stroke="#e6a800" stroke-width="1" stroke-dasharray="1 2" opacity="1" shape-rendering="crispEdges"/>
<line x1="1" y1="671.5" x2="1203" y2="671.5" stroke="#e6a800" stroke-width="1" stroke-dasharray="1 2" opacity="1" shape-rendering="crispEdges"/>
<line x1="1" y1="682.5" x2="1203" y2="682.5" stroke="#00e000" stroke-width="1" stroke-dasharray="1 2" opacity="1" shape-rendering="crispEdges"/>
<path d="M0.0 659.6C0.9 658.3 6.0 649.7 7.5 648.4C8.9 647.1 11.1 647.9 12.4 648.4C13.7 648.9 17.4 652.3 18.7 652.6C20.0 652.9 22.3 652.4 23.6 650.9C24.9 649.4 28.5 641.4 29.9 639.7C31.2 638.0 33.7 638.0 34.8 636.7C36.0 635.4 38.5 629.7 39.8 628.5C41.1 627.3 44.7 626.6 46.0 626.5C47.3 626.4 49.8 626.4 51.0 627.8C52.2 629.2 54.8 636.6 56.0 638.5C57.1 640.3 59.8 641.3 60.9 643.4C62.1 645.6 64.8 654.0 65.9 657.1C67.1 660.2 69.3 668.4 70.9 670.0C72.5 671.7 77.9 671.6 79.6 671.5C81.3 671.5 84.7 669.7 85.8 669.6C87.0 669.4 88.4 670.9 89.6 670.0C90.7 669.2 94.5 663.3 95.8 662.1C97.1 660.9 99.6 659.6 100.7 659.6C101.9 659.6 104.7 661.4 105.7 662.1C106.7 662.8 108.4 664.5 109.5 665.8C110.5 667.1 113.0 672.3 114.4 673.3C115.9 674.2 119.9 674.3 121.9 674.0C123.9 673.7 130.1 671.0 131.8 670.8C133.6 670.6 135.5 671.8 136.8 672.5C138.1 673.3 141.3 676.9 143.0 677.5C144.8 678.1 149.9 678.3 151.7 677.5C153.6 676.7 157.2 672.1 159.2 670.8C161.2 669.5 167.1 667.1 169.2 666.6C171.2 666.0 174.9 665.8 176.6 665.8C178.4 665.9 182.8 666.6 184.1 667.1C185.4 667.6 186.4 669.9 187.8 670.0C189.3 670.2 194.6 668.5 196.5 668.3C198.4 668.1 202.2 667.6 204.0 668.3C205.7 669.0 209.7 672.9 211.4 674.5C213.2 676.1 217.2 680.8 218.9 682.0C220.6 683.2 224.6 683.9 226.4 684.5C228.1 685.1 232.5 686.6 233.8 687.0C235.1 687.3 236.5 688.2 237.6 687.5C238.6 686.7 241.2 682.5 242.5 680.7C243.8 678.9 247.5 674.5 248.8 672.0C250.1 669.6 252.6 662.4 253.7 659.6C254.9 656.8 257.4 650.5 258.7 648.4C260.0 646.3 263.3 641.6 264.9 641.4C266.5 641.3 270.5 646.7 272.4 647.2C274.3 647.6 279.0 645.5 281.1 645.2C283.1 644.8 288.2 644.8 290.0 644.2C291.8 643.5 294.6 640.7 296.2 639.7C297.8 638.7 302.2 635.7 303.7 635.2C305.1 634.8 307.5 636.0 308.7 636.0C309.8 635.9 312.5 634.4 313.6 634.7C314.8 635.0 317.4 638.2 318.6 638.5C319.8 638.7 322.4 637.9 323.6 637.2C324.7 636.5 327.3 633.2 328.6 632.7C329.9 632.3 333.5 633.3 334.8 633.5C336.1 633.7 338.6 634.9 339.8 634.7C340.9 634.6 343.4 633.1 344.7 632.2C346.0 631.4 349.6 628.1 350.9 627.3C352.3 626.4 354.9 625.0 355.9 624.8C356.9 624.6 358.6 624.9 359.7 625.5C360.7 626.1 363.5 628.8 364.6 629.8C365.8 630.7 368.4 633.5 369.6 634.0C370.8 634.4 373.6 632.8 374.6 633.5C375.6 634.2 377.4 638.3 378.3 639.7C379.2 641.2 381.7 644.2 382.5 645.9C383.4 647.6 385.0 653.1 385.8 654.1C386.6 655.2 388.5 654.2 389.5 655.1C390.5 656.1 393.5 660.5 394.5 662.1C395.5 663.7 397.2 668.0 398.2 669.1C399.2 670.2 401.9 671.1 403.2 671.5C404.4 671.9 407.7 673.1 408.9 672.5C410.1 672.0 412.2 668.7 413.1 667.1C414.1 665.4 416.0 660.2 416.9 658.4C417.7 656.6 419.6 653.1 420.6 651.6C421.6 650.2 424.4 647.2 425.6 645.9C426.7 644.7 429.2 642.7 430.5 640.9C431.9 639.2 435.6 632.4 436.8 631.0C437.9 629.6 439.6 630.0 440.5 629.3C441.4 628.5 443.2 625.7 444.2 624.8C445.2 623.8 448.2 622.0 449.2 621.0C450.2 620.1 452.1 618.1 452.9 616.8C453.7 615.6 455.3 611.2 456.2 610.3C457.0 609.5 459.5 608.7 460.4 609.4C461.3 610.0 463.1 614.3 464.1 616.1C465.1 617.9 468.1 623.6 469.1 624.8C470.1 625.9 471.8 625.4 472.8 626.0C473.9 626.7 476.7 629.9 477.8 630.5C479.0 631.1 481.6 630.0 482.8 631.0C483.9 632.0 486.8 638.1 487.8 639.2C488.7 640.3 490.1 640.9 491.0 640.4C491.9 640.0 493.9 635.8 495.2 635.2C496.6 634.6 501.4 634.8 502.7 635.2C504.0 635.6 505.5 637.4 506.4 638.5C507.4 639.6 509.9 643.9 510.9 644.7C511.9 645.5 514.1 644.7 515.1 645.2C516.2 645.6 518.8 648.5 520.1 648.4C521.4 648.3 525.2 644.8 526.3 644.7C527.5 644.6 529.2 647.2 530.0 647.7C530.9 648.1 532.8 646.7 533.8 648.4C534.8 650.1 537.7 659.7 538.8 662.1C539.8 664.5 541.2 668.2 542.5 668.8C543.8 669.4 548.6 666.7 550.0 667.1C551.3 667.4 552.8 670.8 553.7 671.5C554.6 672.3 556.4 673.6 557.4 673.3C558.4 673.0 561.2 669.8 562.4 669.1C563.5 668.3 566.1 667.7 567.4 666.6C568.7 665.5 572.1 660.6 573.6 659.6C575.1 658.6 578.7 658.0 580.0 657.6C581.3 657.2 584.0 656.5 585.0 655.9C586.0 655.3 587.8 653.0 588.7 652.6C589.6 652.3 591.4 653.1 592.4 652.6C593.5 652.1 596.4 649.6 597.4 648.4C598.4 647.2 600.3 643.6 601.1 642.2C602.0 640.7 604.1 637.1 604.9 636.0C605.7 634.9 607.0 632.8 607.9 632.7C608.7 632.6 611.2 634.7 612.3 635.2C613.4 635.7 616.3 637.0 617.3 637.2C618.3 637.4 620.2 638.1 621.0 637.2C621.9 636.3 623.9 630.5 624.8 629.8C625.6 629.0 627.7 630.4 628.5 631.0C629.3 631.6 630.7 634.6 631.5 634.7C632.3 634.9 634.5 631.2 635.2 632.2C635.9 633.3 637.2 641.4 637.7 643.4C638.2 645.5 638.5 648.6 639.2 649.7C639.9 650.7 642.5 652.0 643.4 652.1C644.4 652.3 646.3 650.6 647.2 650.9C648.0 651.2 650.0 652.9 650.9 654.6C651.8 656.4 653.6 664.1 654.6 665.8C655.6 667.6 658.4 668.2 659.6 669.6C660.8 670.9 663.4 675.8 664.6 677.0C665.7 678.3 668.4 680.7 669.6 680.2C670.7 679.8 673.5 674.7 674.5 673.3C675.5 671.9 677.4 669.0 678.3 668.3C679.1 667.6 681.1 668.1 682.0 667.1C682.9 666.0 684.9 661.1 685.7 659.6C686.6 658.2 688.6 655.5 689.5 654.6C690.3 653.8 692.3 653.9 693.2 652.1C694.1 650.4 696.0 643.0 696.9 639.7C697.9 636.4 700.5 625.6 701.4 623.5C702.3 621.5 703.4 622.7 704.4 622.3C705.3 621.9 708.0 620.1 709.4 619.8C710.7 619.5 714.3 619.5 715.6 619.8C716.9 620.1 719.4 622.4 720.5 622.8C721.7 623.2 724.4 623.4 725.5 623.5C726.7 623.7 729.2 624.3 730.5 624.3C731.8 624.3 735.6 622.5 736.7 623.5C737.9 624.6 739.6 631.6 740.4 633.5C741.3 635.4 743.3 638.5 744.2 639.7C745.0 640.9 747.0 642.9 747.9 643.4C748.8 644.0 750.8 643.9 751.6 644.2C752.5 644.5 754.4 644.4 755.4 645.9C756.4 647.4 759.3 655.2 760.3 657.1C761.4 659.1 763.6 662.1 764.6 662.6C765.5 663.1 767.6 662.8 768.6 661.6C769.5 660.4 771.7 654.7 772.8 652.1C773.9 649.6 776.6 641.7 777.8 639.7C778.9 637.7 781.7 635.2 782.7 634.7C783.8 634.3 785.5 636.1 786.5 636.0C787.5 635.9 790.3 633.5 791.4 634.0C792.6 634.4 795.4 638.9 796.4 639.7C797.4 640.5 799.3 641.0 800.1 640.9C801.0 640.9 803.0 639.2 803.9 639.2C804.8 639.2 806.7 640.6 807.6 640.9C808.5 641.3 810.5 643.8 811.3 642.2C812.2 640.6 814.2 629.9 815.1 627.3C815.9 624.7 817.9 621.0 818.8 619.8C819.7 618.6 821.4 617.0 822.5 616.8C823.7 616.6 827.5 616.9 828.8 617.8C830.1 618.7 832.7 623.9 833.7 624.8C834.7 625.6 836.4 625.7 837.5 625.3C838.5 624.8 841.4 621.6 842.4 621.0C843.5 620.5 845.3 620.3 846.2 620.5C847.0 620.8 849.0 624.3 849.9 623.5C850.8 622.7 852.6 615.5 853.6 613.6C854.6 611.7 857.6 608.7 858.6 607.4C859.6 606.0 861.6 602.7 862.3 601.9C863.1 601.1 864.1 600.5 864.8 600.6C865.6 600.8 868.0 602.6 868.6 602.9C869.2 603.1 869.4 602.7 870.0 602.9C870.6 603.1 872.9 604.4 873.7 604.9C874.6 605.3 876.6 606.7 877.5 606.9C878.3 607.0 880.2 605.6 881.2 606.1C882.2 606.6 884.9 609.8 886.2 611.1C887.5 612.4 891.2 616.4 892.4 617.3C893.5 618.2 895.2 618.3 896.1 618.6C897.0 618.8 899.0 619.1 899.9 619.8C900.7 620.5 902.7 622.9 903.6 624.8C904.5 626.7 906.4 633.7 907.3 636.0C908.2 638.2 910.0 642.5 911.0 644.2C912.1 645.8 914.9 649.1 916.0 650.1C917.2 651.2 919.8 652.6 921.0 653.4C922.2 654.1 924.8 656.0 926.0 656.6C927.1 657.2 929.8 657.6 930.9 658.4C932.1 659.1 934.5 662.3 935.9 663.3C937.4 664.3 942.1 666.6 943.4 667.1C944.7 667.5 945.8 666.3 947.1 667.1C948.4 667.8 953.3 672.4 954.6 673.3C955.9 674.2 957.3 673.8 958.3 674.5C959.3 675.3 962.1 679.4 963.3 679.5C964.4 679.6 967.1 676.6 968.3 675.8C969.4 674.9 972.1 673.5 973.2 672.0C974.4 670.6 977.2 664.8 978.2 663.3C979.2 661.8 981.1 659.6 981.9 659.1C982.8 658.6 984.8 659.6 985.7 659.1C986.5 658.6 988.2 656.3 989.4 654.6C990.6 652.9 994.2 646.9 995.6 644.7C997.1 642.4 1000.4 636.2 1001.8 635.2C1003.3 634.3 1006.8 636.0 1008.1 636.5C1009.4 636.9 1011.6 639.1 1013.0 639.2C1014.5 639.3 1019.2 638.2 1020.5 637.2C1021.8 636.3 1023.2 632.7 1024.2 631.0C1025.2 629.3 1028.2 623.5 1029.2 622.3C1030.2 621.0 1032.0 620.1 1032.9 620.3C1033.9 620.5 1036.3 623.8 1037.2 624.3C1038.0 624.7 1039.6 624.7 1040.4 624.3C1041.2 623.8 1043.1 621.0 1044.1 620.3C1045.1 619.6 1048.1 619.0 1049.1 618.6C1050.1 618.1 1052.0 617.0 1052.8 616.6C1053.7 616.1 1055.6 615.8 1056.6 614.8C1057.6 613.9 1060.5 609.8 1061.5 608.6C1062.6 607.4 1064.5 605.1 1065.3 604.4C1066.1 603.7 1067.4 601.6 1068.3 602.4C1069.1 603.2 1071.6 609.1 1072.7 611.1C1073.8 613.1 1076.6 618.4 1077.7 619.8C1078.9 621.2 1081.5 622.0 1082.7 622.8C1083.8 623.6 1086.4 626.0 1087.7 626.8C1089.0 627.5 1092.6 628.8 1093.9 629.3C1095.2 629.7 1097.5 630.8 1098.9 631.0C1100.2 631.2 1103.8 630.9 1105.1 631.0C1106.4 631.1 1108.9 631.8 1110.0 631.7C1111.2 631.7 1114.0 630.2 1115.0 630.2C1116.0 630.3 1117.9 631.9 1118.8 632.2C1119.6 632.6 1121.6 634.1 1122.5 633.5C1123.4 632.9 1125.3 628.8 1126.2 627.3C1127.2 625.8 1130.2 621.3 1130.7 620.5" fill="none" stroke="#ff00ff" stroke-width="2.2" stroke-linejoin="round" stroke-linecap="round"/>
<path d="M0.0 665.8C4.1 665.0 4.1 665.2 12.4 663.3C20.7 661.4 16.6 663.4 24.9 660.1C33.2 656.8 29.0 658.1 37.3 653.4C45.6 648.7 42.7 649.2 49.8 645.9C56.8 642.6 52.7 643.7 58.5 643.4C64.3 643.2 60.1 643.1 67.2 645.2C74.2 647.2 72.1 647.5 79.6 649.7C87.1 651.8 82.9 650.4 89.6 651.6C96.2 652.9 92.9 651.1 99.5 653.4C106.1 655.6 102.8 654.6 109.5 658.4C116.1 662.1 112.8 661.0 119.4 664.6C126.0 668.1 121.9 667.0 129.4 669.1C136.8 671.1 131.8 670.0 141.8 670.8C151.7 671.6 146.8 671.0 159.2 671.5C171.6 672.1 165.8 672.5 179.1 672.5C192.4 672.5 187.4 671.5 199.0 671.5C210.6 671.5 204.0 671.5 213.9 672.5C223.9 673.5 219.7 673.2 228.9 674.5C238.0 675.9 233.8 676.1 241.3 676.5C248.8 676.9 243.8 677.9 251.2 675.8C258.7 673.6 255.4 673.1 263.7 670.0C272.0 667.0 267.8 669.6 276.1 666.6C284.4 663.5 283.9 662.8 288.6 660.8C293.2 658.9 286.2 663.7 290.0 660.8C293.8 657.9 293.3 657.4 300.0 652.1C306.6 646.9 303.3 648.9 309.9 645.2C316.5 641.4 313.2 643.2 319.9 640.9C326.5 638.7 323.2 639.3 329.8 638.5C336.4 637.6 332.3 639.5 339.8 638.5C347.2 637.4 344.7 637.1 352.2 635.2C359.7 633.3 355.5 633.7 362.1 632.7C368.8 631.7 365.5 631.8 372.1 632.2C378.7 632.7 375.4 632.2 382.0 634.0C388.7 635.8 385.4 634.3 392.0 637.7C398.6 641.1 395.3 640.4 401.9 644.2C408.6 648.0 405.3 646.9 411.9 649.2C418.5 651.4 415.2 649.7 421.8 650.9C428.5 652.1 425.2 652.4 431.8 652.6C438.4 652.9 435.5 653.1 441.7 651.6C448.0 650.2 444.6 651.7 450.4 648.4C456.3 645.1 453.8 645.0 459.2 641.7C464.5 638.4 460.8 641.6 466.6 638.5C472.4 635.3 470.3 635.7 476.6 632.2C482.8 628.8 479.5 629.5 485.3 628.0C491.1 626.5 487.8 628.2 494.0 627.8C500.2 627.3 497.3 625.9 503.9 626.8C510.6 627.7 506.4 627.4 513.9 630.5C521.3 633.6 518.0 631.7 526.3 636.0C534.6 640.3 531.3 639.0 538.8 643.4C546.2 647.8 542.9 645.7 548.7 649.2C554.5 652.6 551.2 651.6 556.2 653.9C561.1 656.1 557.8 654.1 563.6 655.9C569.4 657.6 568.1 657.9 573.6 659.1C579.0 660.3 574.5 659.3 580.0 659.6C585.5 659.9 583.3 660.1 590.0 660.1C596.6 660.1 593.7 660.6 599.9 659.6C606.1 658.6 602.8 659.6 608.6 657.1C614.4 654.6 611.9 655.0 617.3 652.1C622.7 649.2 619.8 651.1 624.8 648.4C629.8 645.8 627.3 645.8 632.2 644.2C637.2 642.5 633.5 643.7 639.7 643.4C645.9 643.2 644.3 642.4 650.9 643.4C657.5 644.5 653.4 644.0 659.6 646.7C665.8 649.3 662.1 647.9 669.6 651.4C677.0 654.9 674.5 654.8 682.0 657.1C689.5 659.4 686.6 658.1 691.9 658.4C697.3 658.6 694.0 658.9 698.2 657.9C702.3 656.8 700.6 656.4 704.4 655.1C708.1 653.9 705.6 655.7 709.4 654.1C713.1 652.6 711.0 652.6 715.6 650.4C720.1 648.2 718.5 649.7 723.0 647.7C727.6 645.6 724.7 647.5 729.3 644.2C733.8 640.9 731.7 641.3 736.7 637.7C741.7 634.1 738.0 635.7 744.2 633.5C750.4 631.2 749.6 631.2 755.4 631.0C761.2 630.8 757.0 631.7 761.6 633.0C766.2 634.2 764.1 633.2 769.1 634.7C774.0 636.3 770.7 636.1 776.5 637.7C782.3 639.4 779.8 638.4 786.5 639.7C793.1 641.0 790.6 640.4 796.4 641.7C802.2 642.9 798.9 642.3 803.9 643.4C808.9 644.6 805.5 646.4 811.3 645.2C817.1 643.9 814.7 643.0 821.3 639.7C827.9 636.4 824.6 638.5 831.2 635.2C837.9 631.9 836.2 632.2 841.2 629.8C846.2 627.3 842.9 628.8 846.2 628.0C849.5 627.2 847.0 628.8 851.1 627.3C855.3 625.8 853.6 626.0 858.6 623.5C863.6 621.0 862.3 621.2 866.1 619.8C869.9 618.4 866.2 620.8 870.0 619.3C873.8 617.8 872.5 617.8 877.5 615.3C882.4 612.8 880.0 612.4 884.9 611.8C889.9 611.3 887.4 612.8 892.4 613.6C897.4 614.4 894.9 613.5 899.9 614.3C904.8 615.2 902.3 614.2 907.3 616.1C912.3 617.9 909.4 617.3 914.8 619.8C920.2 622.3 917.7 619.8 923.5 623.5C929.3 627.3 926.4 625.6 932.2 631.0C938.0 636.4 935.1 634.3 940.9 639.7C946.7 645.1 943.4 641.8 949.6 647.2C955.8 652.6 953.3 650.7 959.6 655.9C965.8 661.0 962.5 659.1 968.3 662.6C974.1 666.1 970.7 665.1 977.0 666.3C983.2 667.6 981.1 666.9 986.9 666.3C992.7 665.7 988.6 666.4 994.4 664.6C1000.2 662.8 998.1 663.2 1004.3 660.8C1010.5 658.5 1007.2 660.1 1013.0 657.6C1018.8 655.1 1016.4 656.9 1021.7 653.4C1027.1 649.9 1024.2 651.3 1029.2 647.2C1034.2 643.0 1031.7 644.9 1036.7 640.9C1041.6 637.0 1038.3 639.0 1044.1 635.2C1049.9 631.5 1048.3 633.2 1054.1 629.8C1059.9 626.3 1056.6 627.7 1061.5 624.8C1066.5 621.9 1063.2 622.7 1069.0 621.0C1074.8 619.4 1072.3 620.6 1079.0 619.8C1085.6 619.0 1083.1 619.0 1088.9 618.6C1094.7 618.1 1091.4 617.9 1096.4 618.6C1101.3 619.2 1098.0 619.7 1103.8 620.5C1109.6 621.4 1108.0 620.0 1113.8 621.0C1119.6 622.0 1115.6 622.5 1121.2 623.5C1126.9 624.5 1127.5 623.9 1130.7 624.0" fill="none" stroke="#ffffff" stroke-width="2.2" stroke-linejoin="round" stroke-linecap="round"/>
<rect x="0" y="642" width="1202" height="1" fill="#00f0f0" shape-rendering="crispEdges"/>
<text x="9" y="598" class="lg" fill="#d1d4dc" textLength="111" lengthAdjust="spacingAndGlyphs">价差交易模型_cody</text>
<text x="129" y="598" class="lg" fill="#ff00ff" textLength="12.5" lengthAdjust="spacingAndGlyphs">71</text>
<text x="148" y="598" class="lg" fill="#ffffff" textLength="14" lengthAdjust="spacingAndGlyphs">69</text>
<text x="169" y="598" fill="#d1d4dc" style="font-family:DejaVu Sans,sans-serif;font-size:12.5px">∅</text>
<text x="188" y="598" fill="#d1d4dc" style="font-family:DejaVu Sans,sans-serif;font-size:12.5px">∅</text>
<rect x="218.5" y="690.7" width="23" height="8" rx="4" fill="#ff0000"/>
<rect x="860" y="585" width="10.4" height="8" rx="4" fill="#00ff00"/>
<g shape-rendering="crispEdges">
<rect x="1203" y="233" width="3" height="17" fill="#ff9f1f"/>
<rect x="1203" y="250" width="3" height="211" fill="#ffffff"/>
<rect x="1203" y="461" width="3" height="17" fill="#2962ff"/>
<rect x="1203" y="478" width="3" height="17" fill="#26a69a"/>
<rect x="1203" y="581" width="3" height="17" fill="#00ff00"/>
<rect x="1203" y="613" width="3" height="17" fill="#ff00ff"/>
<rect x="1203" y="630" width="3" height="17" fill="#ffffff"/>
<rect x="1203" y="687" width="3" height="17" fill="#ff0000"/>
</g>
<g fill="#d9d9d9" stroke="#000" stroke-width="2.5" paint-order="stroke" stroke-linejoin="round">
<path d="M12.2 677 H24.3 V691.6 H18 V683 H12.2 Z"/>
<circle cx="28.5" cy="680" r="2.9"/>
<path d="M33.8 677 H41.6 L36.3 691.6 H28.9 Z"/>
<text x="50" y="691.7" style="font-size:21.5px;font-weight:700;font-family:&quot;Liberation Sans&quot;,sans-serif" textLength="120" lengthAdjust="spacingAndGlyphs">TradingView</text>
</g>
<text x="23.6" y="724.5" text-anchor="middle" fill="#1a1a1a" style="font-size:12px">28</text>
<text x="117.2" y="724.5" text-anchor="middle" fill="#1a1a1a" style="font-size:12px">2月</text>
<text x="327.8" y="724.5" text-anchor="middle" fill="#1a1a1a" style="font-size:12px">10</text>
<text x="398.0" y="724.5" text-anchor="middle" fill="#1a1a1a" style="font-size:12px">13</text>
<text x="468.2" y="724.5" text-anchor="middle" fill="#1a1a1a" style="font-size:12px">16</text>
<text x="538.4" y="724.5" text-anchor="middle" fill="#1a1a1a" style="font-size:12px">19</text>
<text x="608.6" y="724.5" text-anchor="middle" fill="#1a1a1a" style="font-size:12px">22</text>
<text x="678.8" y="724.5" text-anchor="middle" fill="#1a1a1a" style="font-size:12px">25</text>
<text x="772.4" y="724.5" text-anchor="middle" fill="#1a1a1a" style="font-size:12px">3月</text>
<text x="842.6" y="724.5" text-anchor="middle" fill="#1a1a1a" style="font-size:12px">4</text>
<text x="912.8" y="724.5" text-anchor="middle" fill="#1a1a1a" style="font-size:12px">7</text>
<text x="983.0" y="724.5" text-anchor="middle" fill="#1a1a1a" style="font-size:12px">10</text>
<text x="1053.2" y="724.5" text-anchor="middle" fill="#1a1a1a" style="font-size:12px">13</text>
<text x="1123.4" y="724.5" text-anchor="middle" fill="#1a1a1a" style="font-size:12px">16</text>
<text x="1193.6" y="724.5" text-anchor="middle" fill="#1a1a1a" style="font-size:12px">19</text>
<rect x="170" y="706" width="144.5" height="24" rx="2" fill="#ffffff"/>
<text x="179" y="725" fill="#131722" style="font-size:12px" textLength="126" lengthAdjust="spacingAndGlyphs" xml:space="preserve">周五 2026-02-06   08:00</text>
</svg></body></html>
